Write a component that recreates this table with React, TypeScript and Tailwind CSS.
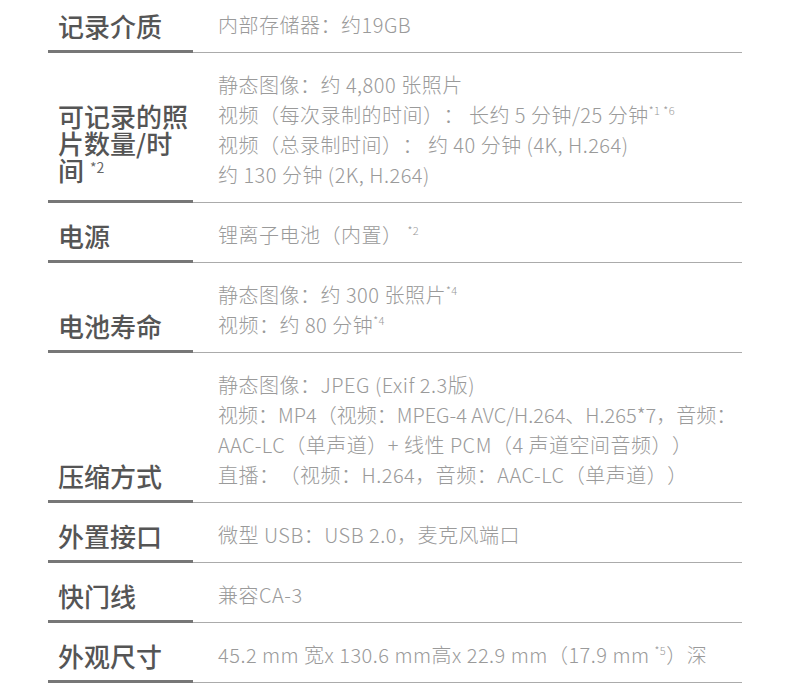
import React from "react";

function Sup({ children }: { children: React.ReactNode }) {
  return <span className="relative -top-[8px] text-[11px] leading-none">{children}</span>;
}

function Row({
  label,
  children,
  first,
}: {
  label: React.ReactNode;
  children: React.ReactNode;
  first?: boolean;
}) {
  return (
    <div className="flex">
      <div className="w-[145px] shrink-0 border-b-[3px] border-[#777777] pl-[10px] pb-[11px] flex items-end">
        <div className="text-[26px] leading-[27px] font-medium text-[#555555]">{label}</div>
      </div>
      <div
        className={
          first
            ? "flex-1 border-b border-[#ababab] pl-[25px] pt-[10px] pb-[12px] text-[20px] leading-[30px] tracking-[0.5px] font-light text-[#9a9a9a]"
            : "flex-1 border-b border-[#ababab] pl-[25px] pt-[17px] pb-[12px] text-[20px] leading-[30px] tracking-[0.5px] font-light text-[#9a9a9a]"
        }
      >
        {children}
      </div>
    </div>
  );
}

export default function App() {
  return (
    <div className="w-[790px] h-[692px] overflow-hidden bg-white [text-spacing-trim:space-all] font-['Noto_Sans_CJK_SC','Noto_Sans',sans-serif]">
      <div className="ml-[48px] w-[694px]">
        <Row label="记录介质" first>
          <div>内部存储器：约19GB</div>
        </Row>
        <Row
          label={
            <>
              可记录的照片数量/时间{" "}
              <span className="relative -top-[8px] text-[14px] font-normal text-[#666]">*2</span>
            </>
          }
        >
          <div>静态图像：约 4,800 张照片</div>
          <div className="whitespace-nowrap">
            视频（每次录制的时间）： 长约 5 分钟/25 分钟<Sup>*1 *6</Sup>
          </div>
          <div>视频（总录制时间）： 约 40 分钟 (4K, H.264)</div>
          <div>约 130 分钟 (2K, H.264)</div>
        </Row>
        <Row label="电源">
          <div>
            锂离子电池（内置） <Sup>*2</Sup>
          </div>
        </Row>
        <Row label="电池寿命">
          <div>
            静态图像：约 300 张照片<Sup>*4</Sup>
          </div>
          <div>
            视频：约 80 分钟<Sup>*4</Sup>
          </div>
        </Row>
        <Row label="压缩方式">
          <div className="whitespace-nowrap">静态图像：JPEG (Exif 2.3版)</div>
          <div className="whitespace-nowrap tracking-normal">视频：MP4（视频：MPEG-4 AVC/H.264、H.265*7，音频：</div>
          <div className="whitespace-nowrap">AAC-LC（单声道）+ 线性 PCM（4 声道空间音频））</div>
          <div className="whitespace-nowrap">直播：（视频：H.264，音频：AAC-LC（单声道））</div>
        </Row>
        <Row label="外置接口">
          <div>微型 USB：USB 2.0，麦克风端口</div>
        </Row>
        <Row label="快门线">
          <div>兼容CA-3</div>
        </Row>
        <Row label="外观尺寸">
          <div className="whitespace-nowrap">
            45.2 mm 宽x 130.6 mm高x 22.9 mm（17.9 mm <Sup>*5</Sup>）深
          </div>
        </Row>
      </div>
    </div>
  );
}
